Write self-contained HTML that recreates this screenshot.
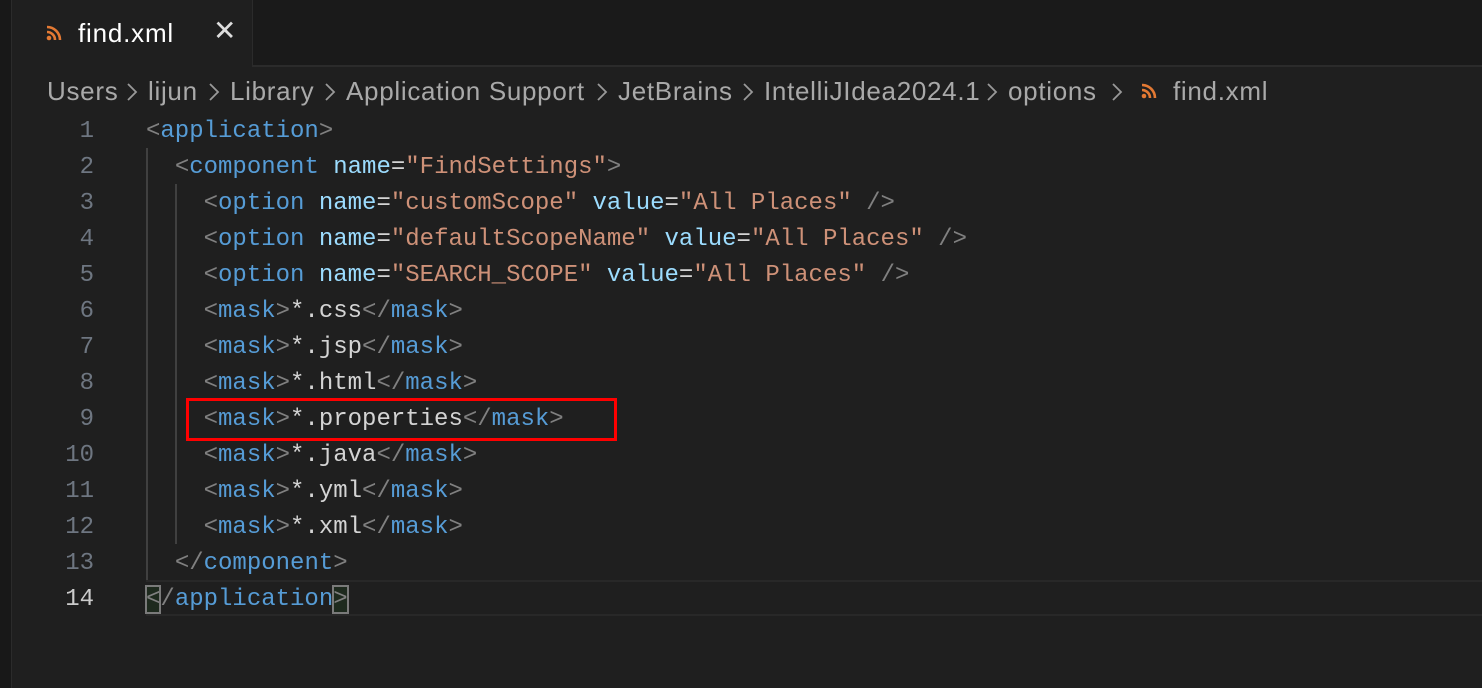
<!DOCTYPE html>
<html><head><meta charset="utf-8"><style>
*{margin:0;padding:0;box-sizing:border-box}
body{width:1482px;height:688px;background:#1f1f1f;position:relative;overflow:hidden;font-family:"Liberation Sans",sans-serif}
.lstrip{position:absolute;left:0;top:0;width:12px;height:688px;background:#181818;border-right:1px solid #2b2b2b}
.tabbar{position:absolute;left:13px;top:0;right:0;height:67px;background:#1a1a1a;border-bottom:2px solid #2b2b2b}
.tab{position:absolute;left:13px;top:0;width:240px;height:67px;background:#1f1f1f;border-right:1px solid #2b2b2b}
.tab .t{position:absolute;left:65px;top:18px;font-size:26px;letter-spacing:0.8px;color:#fff}
.tab .x{position:absolute;left:200px;top:14px;font-size:28px;color:#ddd}
.w{position:absolute;top:76px;font-size:26px;color:#a9a9a9;white-space:nowrap;letter-spacing:0.7px}
.c{position:absolute;top:82px}
.ln{position:absolute;left:40px;width:54px;text-align:right;font-family:"Liberation Mono",monospace;font-size:24px;color:#6e7681;line-height:36px}
.code{position:absolute;left:146px;font-family:"Liberation Mono",monospace;font-size:24px;line-height:36px;white-space:pre;color:#d4d4d4}
.p{color:#808080}.k{color:#569cd6}.a{color:#9cdcfe}.s{color:#ce9178}
.g{position:absolute;width:2px;background:#404040}
</style></head><body>
<div class="lstrip"></div>
<div class="tabbar"></div>
<div class="tab">
<svg style="position:absolute;left:33px;top:25px" width="16" height="16" viewBox="0 0 16 16"><circle cx="3" cy="13" r="2.3" fill="#e37933"/><path d="M1 7a8 8 0 0 1 8 8" stroke="#e37933" stroke-width="2.6" fill="none"/><path d="M1 2a13 13 0 0 1 13 13" stroke="#e37933" stroke-width="2.6" fill="none"/></svg>
<span class="t">find.xml</span><span class="x">✕</span></div>
<span class="w" style="left:47px">Users</span>
<span class="w" style="left:148px">lijun</span>
<span class="w" style="left:230px">Library</span>
<span class="w" style="left:346px">Application Support</span>
<span class="w" style="left:618px">JetBrains</span>
<span class="w" style="left:764px">IntelliJIdea2024.1</span>
<span class="w" style="left:1008px">options</span>
<span class="w" style="left:1173px">find.xml</span>
<svg class="c" style="left:125px" width="14" height="20"><path d="M3 2l8 8-8 8" stroke="#999" stroke-width="1.8" fill="none"/></svg>
<svg class="c" style="left:207px" width="14" height="20"><path d="M3 2l8 8-8 8" stroke="#999" stroke-width="1.8" fill="none"/></svg>
<svg class="c" style="left:323px" width="14" height="20"><path d="M3 2l8 8-8 8" stroke="#999" stroke-width="1.8" fill="none"/></svg>
<svg class="c" style="left:595px" width="14" height="20"><path d="M3 2l8 8-8 8" stroke="#999" stroke-width="1.8" fill="none"/></svg>
<svg class="c" style="left:741px" width="14" height="20"><path d="M3 2l8 8-8 8" stroke="#999" stroke-width="1.8" fill="none"/></svg>
<svg class="c" style="left:985px" width="14" height="20"><path d="M3 2l8 8-8 8" stroke="#999" stroke-width="1.8" fill="none"/></svg>
<svg class="c" style="left:1110px" width="14" height="20"><path d="M3 2l8 8-8 8" stroke="#999" stroke-width="1.8" fill="none"/></svg>
<svg style="position:absolute;left:1141px;top:83px" width="16" height="16" viewBox="0 0 16 16"><circle cx="3" cy="13" r="2.3" fill="#e37933"/><path d="M1 7a8 8 0 0 1 8 8" stroke="#e37933" stroke-width="2.6" fill="none"/><path d="M1 2a13 13 0 0 1 13 13" stroke="#e37933" stroke-width="2.6" fill="none"/></svg>
<div style="position:absolute;left:146px;right:0;top:580px;height:36px;border-top:2px solid #282828;border-bottom:2px solid #282828"></div>
<div class="g" style="left:146px;top:148px;height:432px"></div>
<div class="g" style="left:175px;top:184px;height:360px"></div>
<div class="ln" style="top:114px">1<br>2<br>3<br>4<br>5<br>6<br>7<br>8<br>9<br>10<br>11<br>12<br>13<br><span style="color:#ccc">14</span></div>
<div class="code" style="top:114px"><span class="p">&lt;</span><span class="k">application</span><span class="p">&gt;</span>
  <span class="p">&lt;</span><span class="k">component</span> <span class="a">name</span>=<span class="s">"FindSettings"</span><span class="p">&gt;</span>
    <span class="p">&lt;</span><span class="k">option</span> <span class="a">name</span>=<span class="s">"customScope"</span> <span class="a">value</span>=<span class="s">"All Places"</span> <span class="p">/&gt;</span>
    <span class="p">&lt;</span><span class="k">option</span> <span class="a">name</span>=<span class="s">"defaultScopeName"</span> <span class="a">value</span>=<span class="s">"All Places"</span> <span class="p">/&gt;</span>
    <span class="p">&lt;</span><span class="k">option</span> <span class="a">name</span>=<span class="s">"SEARCH_SCOPE"</span> <span class="a">value</span>=<span class="s">"All Places"</span> <span class="p">/&gt;</span>
    <span class="p">&lt;</span><span class="k">mask</span><span class="p">&gt;</span>*.css<span class="p">&lt;/</span><span class="k">mask</span><span class="p">&gt;</span>
    <span class="p">&lt;</span><span class="k">mask</span><span class="p">&gt;</span>*.jsp<span class="p">&lt;/</span><span class="k">mask</span><span class="p">&gt;</span>
    <span class="p">&lt;</span><span class="k">mask</span><span class="p">&gt;</span>*.html<span class="p">&lt;/</span><span class="k">mask</span><span class="p">&gt;</span>
    <span class="p">&lt;</span><span class="k">mask</span><span class="p">&gt;</span>*.properties<span class="p">&lt;/</span><span class="k">mask</span><span class="p">&gt;</span>
    <span class="p">&lt;</span><span class="k">mask</span><span class="p">&gt;</span>*.java<span class="p">&lt;/</span><span class="k">mask</span><span class="p">&gt;</span>
    <span class="p">&lt;</span><span class="k">mask</span><span class="p">&gt;</span>*.yml<span class="p">&lt;/</span><span class="k">mask</span><span class="p">&gt;</span>
    <span class="p">&lt;</span><span class="k">mask</span><span class="p">&gt;</span>*.xml<span class="p">&lt;/</span><span class="k">mask</span><span class="p">&gt;</span>
  <span class="p">&lt;/</span><span class="k">component</span><span class="p">&gt;</span>
<span class="p" style="outline:2px solid #7a7a7a;outline-offset:-1px;background:#1e2a1e">&lt;</span><span class="p">/</span><span class="k">application</span><span class="p" style="outline:2px solid #7a7a7a;outline-offset:-1px;background:#1e2a1e">&gt;</span></div>
<div style="position:absolute;left:186px;top:398px;width:431px;height:43px;border:3px solid #f00"></div>
</body></html>
